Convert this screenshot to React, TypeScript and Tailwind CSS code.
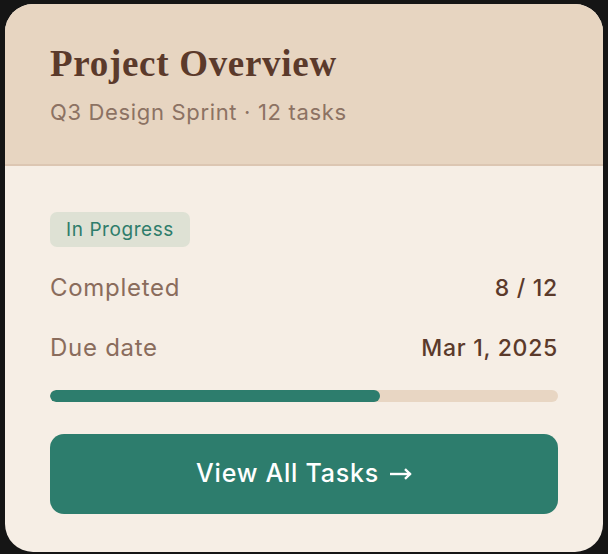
export default function App() {
  const done = 8;
  const total = 12;
  const pct = 65;

  return (
    <div className="min-h-[554px] w-[608px] bg-[#151515] pl-[5px] pt-[4px] font-['Inter','Liberation_Sans',sans-serif]">
      <div className="flex h-[548px] w-[598px] flex-col overflow-hidden rounded-[28px] bg-[#f6eee5]">
        {/* Header */}
        <div className="h-[162px] border-b-[2px] border-[#dcc6b2] bg-[#e7d5c1] px-[45px] pt-[39px]">
          <h1 className="font-['Liberation_Serif',serif] text-[37px] font-bold leading-[42px] tracking-[0.7px] text-[#5b3a2b]">
            Project Overview
          </h1>
          <p className="mt-[13px] text-[22px] leading-[28px] tracking-[0.03em] text-[#8c7263]">
            Q3 Design Sprint · 12 tasks
          </p>
        </div>

        {/* Body */}
        <div className="flex flex-1 flex-col px-[45px] pt-[46px]">
          <span className="self-start rounded-[7px] bg-[#dee1d4] px-[16px] py-[5px] text-[19px] leading-[25px] tracking-[0.03em] text-[#2e7d6b]">
            In Progress
          </span>

          <div className="mt-[26px] flex items-center justify-between text-[24px] leading-[30px] tracking-[0.03em]">
            <span className="text-[#8a6c5c]">Completed</span>
            <span className="text-[23px] font-medium text-[#5b3a2b]">
              {done} / {total}
            </span>
          </div>
          <div className="mt-[30px] flex items-center justify-between text-[24px] leading-[30px] tracking-[0.03em]">
            <span className="text-[#8a6c5c]">Due date</span>
            <span className="text-[23px] font-medium text-[#5b3a2b]">Mar 1, 2025</span>
          </div>

          <div className="mt-[27px] h-[12px] w-full overflow-hidden rounded-full bg-[#e8d6c3]">
            <div className="h-full rounded-full bg-[#2d7d6d]" style={{ width: `${pct}%` }} />
          </div>

          <button
            type="button"
            className="mt-[32px] flex h-[80px] w-full items-center justify-center rounded-[14px] bg-[#2d7d6d] text-[25px] font-medium tracking-[0.03em] text-white"
          >
            View All Tasks
            <svg width="22" height="14" viewBox="0 0 22 14" className="ml-[11px]" fill="none" stroke="currentColor" strokeWidth="2.4" strokeLinecap="square">
              <path d="M1 7h18.5" />
              <path d="M15 2.2l5 4.8-5 4.8" strokeLinecap="butt" strokeLinejoin="miter" />
            </svg>
          </button>
        </div>
      </div>
    </div>
  );
}
